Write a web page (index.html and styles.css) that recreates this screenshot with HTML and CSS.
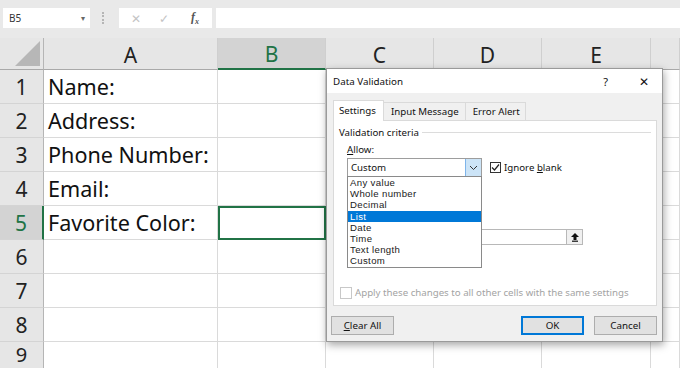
FILE: index.html
```html
<!DOCTYPE html>
<html lang="en">
<head>
  <meta charset="UTF-8" />
  <title>Data Validation</title>
  <link rel="stylesheet" href="styles.css">
</head>
<body>
  <div class="toolbar">
    <div class="name-box">B5<span class="nb-arrow">&#9662;</span></div>
    <div class="grip"></div>
    <div class="fx-box">
      <span class="fx-cancel">&#10005;</span>
      <span class="fx-ok">&#10003;</span>
      <span class="fx-label">f<sub>x</sub></span>
    </div>
    <div class="formula"></div>
  </div>

  <div class="sheet">
    <div class="hd corner"><span class="tri"></span></div>
    <div class="hd col">A</div>
    <div class="hd col sel">B</div>
    <div class="hd col">C</div>
    <div class="hd col">D</div>
    <div class="hd col">E</div>
    <div class="hd col"></div>

    <div class="rh">1</div><div class="c">Name:</div><div class="c"></div><div class="c"></div><div class="c"></div><div class="c"></div><div class="c"></div>
    <div class="rh">2</div><div class="c">Address:</div><div class="c"></div><div class="c"></div><div class="c"></div><div class="c"></div><div class="c"></div>
    <div class="rh">3</div><div class="c">Phone Number:</div><div class="c"></div><div class="c"></div><div class="c"></div><div class="c"></div><div class="c"></div>
    <div class="rh">4</div><div class="c">Email:</div><div class="c"></div><div class="c"></div><div class="c"></div><div class="c"></div><div class="c"></div>
    <div class="rh sel">5</div><div class="c">Favorite Color:</div><div class="c active"></div><div class="c"></div><div class="c"></div><div class="c"></div><div class="c"></div>
    <div class="rh">6</div><div class="c"></div><div class="c"></div><div class="c"></div><div class="c"></div><div class="c"></div><div class="c"></div>
    <div class="rh">7</div><div class="c"></div><div class="c"></div><div class="c"></div><div class="c"></div><div class="c"></div><div class="c"></div>
    <div class="rh">8</div><div class="c"></div><div class="c"></div><div class="c"></div><div class="c"></div><div class="c"></div><div class="c"></div>
    <div class="rh last">9</div><div class="c"></div><div class="c"></div><div class="c"></div><div class="c"></div><div class="c"></div><div class="c"></div>
  </div>

  <!-- Dialog liegt über dem Tabellenblatt -->
  <div class="dialog">
    <div class="titlebar">
      <span class="title">Data Validation</span>
      <span class="help">?</span>
      <span class="close">&#10005;</span>
    </div>
    <div class="dlg-body">
      <div class="tabs">
        <div class="tab active">Settings</div>
        <div class="tab">Input Message</div>
        <div class="tab">Error Alert</div>
      </div>
      <div class="panel">
        <div class="group-label"><span>Validation criteria</span></div>
        <div class="field-label"><u>A</u>llow:</div>
        <div class="allow-row">
          <div class="combo">
            <span>Custom</span>
            <span class="combo-btn">
              <svg width="9" height="6" viewBox="0 0 9 6"><path d="M1 1 L4.5 4.5 L8 1" fill="none" stroke="#333" stroke-width="1"/></svg>
            </span>
            <ul class="droplist">
              <li>Any value</li>
              <li>Whole number</li>
              <li>Decimal</li>
              <li class="hl">List</li>
              <li>Date</li>
              <li>Time</li>
              <li>Text length</li>
              <li>Custom</li>
            </ul>
          </div>
          <label class="check">
            <span class="box">
              <svg width="9" height="9" viewBox="0 0 9 9"><path d="M1 4.5 L3.5 7 L8 1.5" fill="none" stroke="#222" stroke-width="1.2"/></svg>
            </span>
            <span>Ignore <u>b</u>lank</span>
          </label>
        </div>
        <div class="source-row">
          <div class="source-input"></div>
          <div class="source-btn">
            <svg width="10" height="10" viewBox="0 0 10 10"><path d="M5 1 L9 5 L6.5 5 L6.5 8 L3.5 8 L3.5 5 L1 5 Z" fill="#111"/><rect x="2" y="8.6" width="6" height="1.2" fill="#111"/></svg>
          </div>
        </div>
        <label class="check apply">
          <span class="box"></span>
          <span>Apply these changes to all other cells with the same settings</span>
        </label>
      </div>
      <div class="footer">
        <button class="btn"><u>C</u>lear All</button>
        <span class="spacer"></span>
        <button class="btn primary">OK</button>
        <button class="btn">Cancel</button>
      </div>
    </div>
  </div>

  <svg class="cursor" width="12" height="19" viewBox="0 0 12 19">
    <path d="M0.5 0.5 L0.5 15 L4 11.6 L6.5 17.5 L8.7 16.6 L6.2 10.8 L11 10.8 Z" fill="#fff" stroke="#111" stroke-width="1"/>
  </svg>
</body>
</html>
```

FILE: styles.css
```css
body {
  margin: 0;
  width: 680px;
  height: 368px;
  overflow: hidden;
  background: #fff;
  font-family: 'Noto Sans', 'Open Sans', sans-serif;
  position: relative;
}

/* Formelleiste */
.toolbar {
  height: 38px;
  background: #e9e9e9;
  display: flex;
  align-items: flex-start;
  padding-top: 8px;
  box-sizing: border-box;
}

.name-box {
  margin-left: 3px;
  width: 87px;
  height: 20px;
  background: #fff;
  box-sizing: border-box;
  font-size: 10px;
  color: #333;
  padding-left: 6px;
  line-height: 20px;
  position: relative;
}

.nb-arrow {
  position: absolute;
  right: 5px;
  top: 0;
  font-size: 8px;
  color: #666;
}

.grip {
  width: 2px;
  height: 12px;
  margin: 4px 13px 0 12px;
  border-left: 2px dotted #b5b5b5;
}

.fx-box {
  width: 93px;
  height: 20px;
  background: #fff;
  display: flex;
  align-items: center;
  font-size: 12px;
}

.fx-cancel {
  color: #c4c4c4;
  margin-left: 12px;
}

.fx-ok {
  color: #c4c4c4;
  margin-left: 18px;
}

.fx-label {
  margin-left: 22px;
  font-family: 'Liberation Serif', serif;
  font-style: italic;
  font-weight: bold;
  color: #555;
  font-size: 12px;
}

.fx-label sub {
  font-size: 8px;
}

.formula {
  margin-left: 4px;
  flex: 1;
  height: 20px;
  background: #fff;
}

/* Tabellenblatt */
.sheet {
  display: grid;
  grid-template-columns: 44px 174px 108px 108px 108px 109px 29px;
  grid-template-rows: 32px;
  grid-auto-rows: 34px;
}

.hd {
  background: #e6e6e6;
  border-bottom: 1px solid #a9a9a9;
  border-right: 1px solid #cfcfcf;
  box-sizing: border-box;
}

.corner {
  position: relative;
  border-right: 1px solid #b5b5b5;
}

.tri {
  position: absolute;
  right: 3px;
  bottom: 3px;
  width: 0;
  height: 0;
  border-left: 25px solid transparent;
  border-bottom: 25px solid #b7b7b7;
}

.col {
  font-size: 21px;
  color: #222;
  display: flex;
  justify-content: center;
  align-items: center;
  padding-top: 2px;
}

.col.sel {
  background: #d3d3d3;
  color: #217346;
  border-bottom: 2px solid #217346;
}

.rh {
  background: #e6e6e6;
  border-right: 1px solid #b5b5b5;
  border-bottom: 1px solid #d4d4d4;
  box-sizing: border-box;
  font-size: 21px;
  color: #222;
  display: flex;
  justify-content: center;
  align-items: center;
}

.rh.last {
  align-items: flex-start;
  padding-top: 1px;
  font-size: 20px;
  line-height: 24px;
}

.rh.sel {
  background: #d3d3d3;
  color: #217346;
  border-right: 2px solid #217346;
}

.c {
  border-right: 1px solid #dadada;
  border-bottom: 1px solid #dadada;
  box-sizing: border-box;
  font-size: 21.6px;
  color: #111;
  padding-left: 4px;
  display: flex;
  align-items: center;
  white-space: nowrap;
}

.c.active {
  border: 2px solid #217346;
}

/* Dialog */
.dialog {
  position: absolute;
  left: 326px;
  top: 68px;
  width: 337px;
  height: 274px;
  background: #f0f0f0;
  border: 1px solid #9a9a9a;
  box-sizing: border-box;
  box-shadow: 1px 3px 8px rgba(0, 0, 0, 0.35);
  display: flex;
  flex-direction: column;
  font-size: 9.7px;
  color: #111;
}

.titlebar {
  height: 24px;
  background: #fff;
  display: flex;
  align-items: center;
  padding-left: 6px;
  font-size: 9.8px;
}

.title {
  flex: 1;
}

.help {
  font-size: 11px;
  margin-right: 31px;
}

.close {
  font-size: 12px;
  margin-right: 13px;
}

.dlg-body {
  padding: 7px 5px 0 6px;
  display: flex;
  flex-direction: column;
}

.tabs {
  display: flex;
  height: 20px;
  align-items: flex-end;
}

.tab {
  height: 18px;
  padding: 0 6px 0 7px;
  line-height: 18px;
  border: 1px solid #dadada;
  border-bottom: none;
  margin-left: -1px;
  box-sizing: border-box;
}

.tab.active {
  width: 51px;
  height: 21px;
  background: #fff;
  margin-left: 0;
  margin-bottom: -1px;
  position: relative;
  z-index: 1;
  padding: 0 5px;
  line-height: 20px;
}

.tab:last-child {
  padding: 0 5px 0 7px;
}

.panel {
  height: 186px;
  background: #fff;
  border: 1px solid #dadada;
  box-sizing: border-box;
  padding: 5px 5px 0 5px;
  display: flex;
  flex-direction: column;
}

.group-label {
  display: flex;
  align-items: center;
  height: 13px;
}

.group-label::after {
  content: "";
  flex: 1;
  border-top: 1px solid #dcdcdc;
  margin-left: 3px;
}

.field-label {
  margin: 4px 0 0 8px;
  height: 14px;
}

.allow-row {
  display: flex;
  align-items: center;
  margin: 1px 0 0 8px;
}

.combo {
  width: 135px;
  height: 19px;
  border: 1px solid #9d9d9d;
  box-sizing: border-box;
  display: flex;
  align-items: center;
  padding-left: 3px;
  position: relative;
}

.combo span:first-child {
  flex: 1;
}

.combo-btn {
  width: 15px;
  height: 17px;
  background: #cce4f7;
  border-left: 1px solid #7eb4ea;
  display: flex;
  justify-content: center;
  align-items: center;
}

/* Aufgeklappte Liste, enge Zeilen wie im Original */
.droplist {
  position: absolute;
  left: -1px;
  top: 17px;
  width: 135px;
  margin: 0;
  padding: 0;
  list-style: none;
  background: #fff;
  border: 1px solid #8a8a8a;
  box-sizing: border-box;
  z-index: 2;
  font-family: 'Liberation Sans', Arial, sans-serif;
  font-size: 9.6px;
  letter-spacing: 0.35px;
  color: #1a1a1a;
}

.droplist li {
  height: 11.2px;
  line-height: 11.2px;
  padding-left: 2px;
}

.droplist li.hl {
  background: #0078d7;
  color: #fff;
}

.check {
  display: flex;
  align-items: center;
  margin-left: 8px;
}

.box {
  width: 11px;
  height: 11px;
  border: 1px solid #333;
  box-sizing: border-box;
  margin-right: 3px;
  display: flex;
  justify-content: center;
  align-items: center;
  background: #fff;
}

.source-row {
  display: flex;
  margin: 52px 0 0 8px;
}

.source-input {
  width: 219px;
  height: 16px;
  border: 1px solid #b8b8b8;
  border-right: none;
  box-sizing: border-box;
}

.source-btn {
  width: 17px;
  height: 16px;
  border: 1px solid #b8b8b8;
  background: #f0f0f0;
  box-sizing: border-box;
  display: flex;
  justify-content: center;
  align-items: center;
}

.check.apply {
  margin: 41px 0 0 1px;
  color: #a3a3a3;
}

.check.apply .box {
  width: 12px;
  height: 12px;
  border-color: #c8c8c8;
  margin-right: 3px;
}

.footer {
  display: flex;
  margin-top: 10px;
  margin-left: -2px;
}

.spacer {
  flex: 1;
}

.btn {
  width: 63px;
  height: 19px;
  background: #e1e1e1;
  border: 1px solid #adadad;
  font-family: inherit;
  font-size: 9.8px;
  color: #111;
  padding: 0;
  margin-right: 10px;
}

.btn:last-child {
  margin-right: 0;
}

.btn.primary {
  border: 2px solid #0078d7;
}

.cursor {
  position: absolute;
  left: 422px;
  top: 214px;
}
```
